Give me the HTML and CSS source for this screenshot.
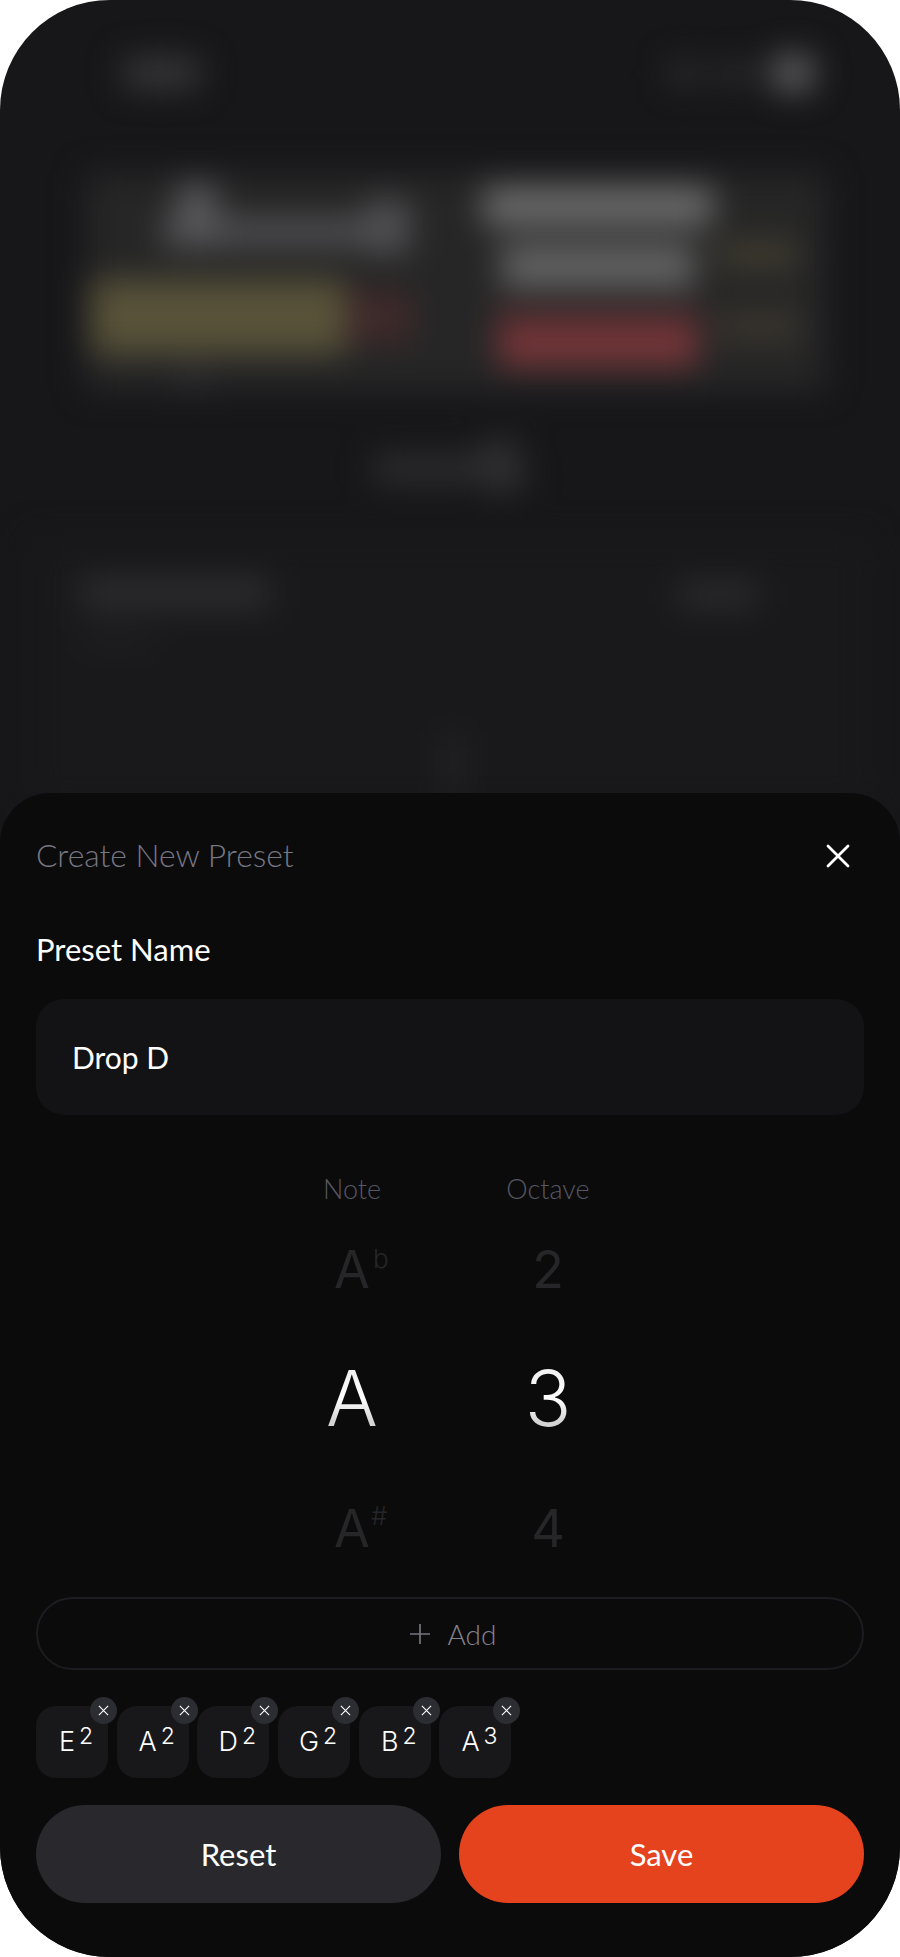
FILE: index.html
```html
<!DOCTYPE html>
<html lang="en">
<head>
<meta charset="utf-8">
<title>Create New Preset</title>
<link rel="stylesheet" href="styles.css">
</head>
<body>
<div class="phone">
  <div class="backdrop" aria-hidden="true">
    <div class="status">
      <div class="blob time"></div>
      <div class="status-right">
        <div class="blob signal"></div>
        <div class="blob wifi"></div>
        <div class="blob battery"></div>
      </div>
    </div>
    <div class="banner">
      <div class="banner-left">
        <div class="logo-shape">
          <div class="blob logo-peak"></div>
          <div class="blob logo-base"></div>
          <div class="blob logo-tail"></div>
        </div>
        <div class="banner-bar">
          <div class="blob bar-tan"></div>
          <div class="blob bar-red"></div>
        </div>
        <div class="blob banner-foot"></div>
      </div>
      <div class="banner-mid">
        <div class="blob line-one"></div>
        <div class="blob line-two"></div>
        <div class="blob btn-halo"></div>
        <div class="blob banner-btn"></div>
      </div>
      <div class="banner-right">
        <div class="blob tan-one"></div>
        <div class="blob tan-two"></div>
      </div>
    </div>
    <div class="brand">
      <div class="blob brand-word"></div>
      <div class="blob brand-mark"></div>
    </div>
    <div class="card">
      <div class="card-row">
        <div class="card-left">
          <div class="blob card-title"></div>
          <div class="blob card-sub"></div>
        </div>
        <div class="blob card-action"></div>
      </div>
      <div class="blob peg"></div>
    </div>
  </div>

  <div class="sheet">
    <div class="sheet-head">
      <h1 class="title">Create New Preset</h1>
      <svg class="close" viewBox="0 0 24 24" width="24" height="24" fill="none" stroke="#fff" stroke-width="2.8" stroke-linecap="round"><path d="M2 2 22 22M22 2 2 22"/></svg>
    </div>
    <div class="field-label">Preset Name</div>
    <div class="input">Drop D</div>

    <div class="wheel">
      <div class="col">
        <div class="col-label">Note</div>
        <div class="item faded"><span class="note">A<sup class="acc acc-flat">b</sup></span></div>
        <div class="item active"><span class="active-text">A</span></div>
        <div class="item faded"><span class="note">A<sup class="acc acc-sharp">#</sup></span></div>
      </div>
      <div class="col">
        <div class="col-label">Octave</div>
        <div class="item faded">2</div>
        <div class="item active"><span class="active-text">3</span></div>
        <div class="item faded">4</div>
      </div>
    </div>

    <div class="add">
      <svg viewBox="0 0 20 20" width="20" height="20" fill="none" stroke="#77767f" stroke-width="1.7"><path d="M10 0V20M0 10H20"/></svg>
      <span>Add</span>
    </div>

    <div class="chips">
      <div class="chip"><span class="chip-note">E</span><span class="chip-oct">2</span><span class="chip-x"><svg viewBox="0 0 12 12" width="11" height="11" fill="none" stroke="#fff" stroke-width="1.2"><path d="M1 1 11 11M11 1 1 11"/></svg></span></div>
      <div class="chip"><span class="chip-note">A</span><span class="chip-oct">2</span><span class="chip-x"><svg viewBox="0 0 12 12" width="11" height="11" fill="none" stroke="#fff" stroke-width="1.2"><path d="M1 1 11 11M11 1 1 11"/></svg></span></div>
      <div class="chip"><span class="chip-note">D</span><span class="chip-oct">2</span><span class="chip-x"><svg viewBox="0 0 12 12" width="11" height="11" fill="none" stroke="#fff" stroke-width="1.2"><path d="M1 1 11 11M11 1 1 11"/></svg></span></div>
      <div class="chip"><span class="chip-note">G</span><span class="chip-oct">2</span><span class="chip-x"><svg viewBox="0 0 12 12" width="11" height="11" fill="none" stroke="#fff" stroke-width="1.2"><path d="M1 1 11 11M11 1 1 11"/></svg></span></div>
      <div class="chip"><span class="chip-note">B</span><span class="chip-oct">2</span><span class="chip-x"><svg viewBox="0 0 12 12" width="11" height="11" fill="none" stroke="#fff" stroke-width="1.2"><path d="M1 1 11 11M11 1 1 11"/></svg></span></div>
      <div class="chip"><span class="chip-note">A</span><span class="chip-oct">3</span><span class="chip-x"><svg viewBox="0 0 12 12" width="11" height="11" fill="none" stroke="#fff" stroke-width="1.2"><path d="M1 1 11 11M11 1 1 11"/></svg></span></div>
    </div>

    <div class="actions">
      <button class="btn btn-reset">Reset</button>
      <button class="btn btn-save">Save</button>
    </div>
  </div>
</div>
</body>
</html>
```
FILE: styles.css
```css
* { box-sizing: border-box; }
html, body { margin: 0; padding: 0; background: #fff; }
body { font-family: "Lato", "Noto Sans", sans-serif; }

.phone {
  position: relative;
  width: 900px;
  height: 1957px;
  border-radius: 110px;
  overflow: hidden;
  background: #17171a;
}

/* blurred page behind the sheet */
.backdrop { height: 800px; filter: blur(16px); }
.blob { flex: none; }
.status { display: flex; justify-content: space-between; align-items: center; height: 40px; padding: 0 85px 0 123px; transform: translateY(53px); }
.time { width: 77px; height: 32px; background: #363638; }
.status-right { display: flex; align-items: center; gap: 14px; }
.signal { width: 30px; height: 22px; background: #2f2f31; }
.wifi { width: 44px; height: 18px; background: #2e2e30; }
.battery { width: 44px; height: 38px; border-radius: 12px; background: #5a5a5c; }

.banner {
  display: flex;
  margin: 133px 74px 0 86px;
  height: 218px;
  padding-top: 10px;
  background: #262626;
}
.banner-left { width: 380px; display: flex; flex-direction: column; }
.logo-shape { position: relative; height: 73px; margin-left: 76px; width: 250px; display: flex; align-items: flex-end; }
.logo-base { width: 245px; height: 30px; background: #4e4e51; }
.logo-peak { position: absolute; left: 15px; top: 0; width: 40px; height: 64px; background: #58585b; }
.logo-tail { position: absolute; left: 204px; top: 17px; width: 44px; height: 54px; background: #505053; }
.banner-bar { display: flex; align-items: center; margin-top: 33px; height: 74px; margin-left: 4px; }
.bar-tan { width: 256px; height: 74px; background: #585239; }
.bar-red { width: 67px; height: 50px; background: #40292a; }
.banner-foot { width: 30px; height: 24px; margin: 13px 0 0 92px; background: #2f2f31; }
.banner-mid { width: 240px; margin-left: 12px; padding-top: 3px; display: flex; flex-direction: column; align-items: center; }
.line-one { width: 230px; height: 40px; background: #6a6a6a; }
.line-two { width: 194px; height: 44px; margin-top: 18px; background: #626262; }
.btn-halo { width: 212px; height: 18px; margin-top: 17px; background: #432a2c; }
.banner-btn { width: 200px; height: 44px; background: #743538; }
.banner-right { padding: 59px 0 0 0; }
.tan-one { width: 80px; height: 25px; background: #423d2f; }
.tan-two { width: 84px; height: 30px; margin-top: 44px; background: #3a352d; }

.brand { display: flex; justify-content: flex-start; align-items: flex-end; margin-top: 47px; padding-left: 373px; height: 54px; }
.brand-word { width: 109px; height: 30px; background: #2c2c2e; margin-bottom: 8px; }
.brand-mark { width: 40px; height: 52px; background: #303033; transform: rotate(-16deg); }

.card { margin: 45px 30px 0; height: 270px; background: #19191c; padding: 40px 50px 0; }
.card-row { display: flex; justify-content: space-between; align-items: flex-start; }
.card-title { width: 190px; height: 32px; background: #2c2c2d; }
.card-sub { width: 74px; height: 14px; margin-top: 24px; background: #212123; }
.card-action { width: 80px; height: 26px; margin: 5px 62px 0 0; background: #2b2b2c; }
.peg { width: 16px; height: 70px; margin: 85px 0 0 365px; background: #252527; }

/* bottom sheet */
.sheet {
  position: absolute;
  left: 0;
  right: 0;
  bottom: 0;
  height: 1164px;
  padding: 43px 36px 0;
  background: #0b0b0c;
  border-radius: 50px 50px 0 0;
  color: #fff;
}
.sheet-head { display: flex; justify-content: space-between; align-items: center; height: 40px; }
.title { margin: 0; font-size: 31.8px; font-weight: 300; color: #777783; line-height: 40px; transform: translateY(-1px); }
.close { margin-right: 14px; }
.field-label { margin-top: 58px; height: 30px; line-height: 30px; font-size: 31px; }
.input {
  margin-top: 35px;
  height: 116px;
  padding-left: 36px;
  display: flex;
  align-items: center;
  font-size: 30px;
  background: #131316;
  border-radius: 28px;
}

.wheel { display: flex; justify-content: center; margin-top: 59px; font-family: "Inter", sans-serif; }
.col { width: 196px; display: flex; flex-direction: column; align-items: center; }
.col-label { height: 30px; line-height: 30px; font-family: "Lato", sans-serif; font-weight: 300; font-size: 27px; color: #565762; }
.item { display: flex; align-items: center; justify-content: center; font-weight: 400; line-height: 1; }
.faded { height: 60px; margin-top: 36px; font-size: 52px; color: #262628; }
.active { height: 76px; margin-top: 60px; margin-bottom: 27px; font-size: 77px; font-weight: 350; }
.active-text {
  background: linear-gradient(180deg, #f2f2f2 20%, #fff 50%, #d4d4d4 80%);
  -webkit-background-clip: text;
  background-clip: text;
  color: transparent;
}
.note { position: relative; }
.acc { position: absolute; left: 100%; font-size: 26px; line-height: 1; font-weight: 300; vertical-align: baseline; }
.acc-flat { top: 2px; margin-left: 3px; }
.acc-sharp { top: 0; margin-left: 1px; }

.add {
  margin-top: 38px;
  height: 73px;
  padding-left: 6px;
  display: flex;
  align-items: center;
  justify-content: center;
  gap: 18px;
  border: 2px solid #1d1d21;
  border-radius: 37px;
  font-size: 28px;
  font-weight: 300;
  color: #85848e;
}

.chips { display: flex; gap: 8.7px; margin-top: 36px; font-family: "Inter", sans-serif; }
.chip {
  position: relative;
  width: 72px;
  height: 72px;
  padding: 20px 0 0 8px;
  display: flex;
  justify-content: center;
  align-items: flex-start;
  background: #18181b;
  border-radius: 20px;
  font-weight: 350;
}
.chip-note { font-size: 27px; line-height: 32px; }
.chip-oct { font-size: 23px; line-height: 26px; margin-left: 4px; margin-top: -3px; }
.chip-x {
  position: absolute;
  top: -9px;
  right: -9px;
  width: 27px;
  height: 27px;
  display: flex;
  align-items: center;
  justify-content: center;
  background: #2c2c33;
  border-radius: 50%;
}

.actions { display: flex; gap: 18px; margin-top: 27px; }
.btn {
  flex: 1;
  height: 98px;
  border: 0;
  border-radius: 49px;
  color: #fff;
  font-family: "Lato", sans-serif;
  font-size: 31px;
}
.btn-reset { background: #28282d; }
.btn-save { background: #e5431e; }
```
